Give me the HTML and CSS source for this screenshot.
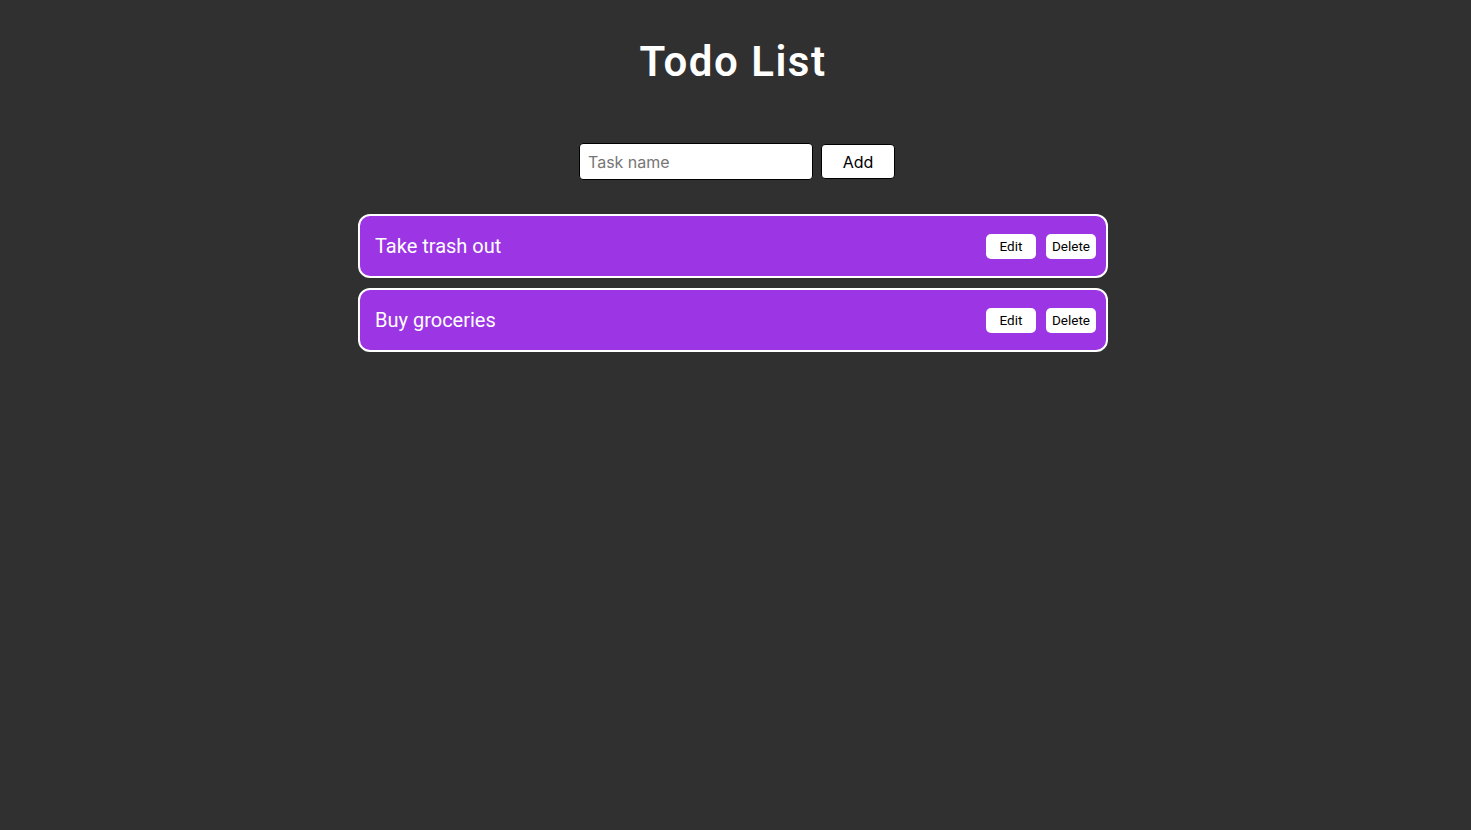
FILE: index.html
```html
<!DOCTYPE html>
<html>
<head>
<meta charset="utf-8">
<link rel="stylesheet" href="styles.css">
</head>
<body>
<div class="app">
  <h1 class="title">Todo List</h1>
  <form class="add-form">
    <input class="task-input" type="text" placeholder="Task name">
    <button class="add-btn" type="button">Add</button>
  </form>
  <ul class="todo-list">
    <li class="todo-item">
      <span class="todo-text">Take trash out</span>
      <div class="todo-actions">
        <button class="small-btn" type="button">Edit</button>
        <button class="small-btn" type="button">Delete</button>
      </div>
    </li>
    <li class="todo-item">
      <span class="todo-text">Buy groceries</span>
      <div class="todo-actions">
        <button class="small-btn" type="button">Edit</button>
        <button class="small-btn" type="button">Delete</button>
      </div>
    </li>
  </ul>
</div>
</body>
</html>
```
FILE: styles.css
```css
html, body {
  margin: 0;
  padding: 0;
  background: #303030;
  font-family: Roboto, "Liberation Sans", sans-serif;
  color: #ffffff;
}
.app {
  display: flex;
  flex-direction: column;
  align-items: center;
  padding-top: 36px;
  padding-right: 5px;
}
.title {
  margin: 0;
  font-size: 42px;
  font-weight: 600;
  letter-spacing: 1.5px;
  line-height: 52px;
}
.add-form {
  display: flex;
  align-items: center;
  gap: 8px;
  margin-top: 55px;
  padding-left: 8px;
}
.task-input {
  box-sizing: border-box;
  width: 234px;
  height: 37px;
  border: 1px solid #000;
  border-radius: 4px;
  padding: 0 8px;
  font-family: Inter, sans-serif;
  font-size: 16px;
  color: #000;
  background: #fff;
}
.task-input::placeholder {
  color: #767676;
}
.add-btn {
  box-sizing: border-box;
  width: 74px;
  height: 35px;
  border: 1px solid #000;
  border-radius: 4px;
  background: #fff;
  color: #000;
  font-family: Inter, sans-serif;
  font-size: 16px;
}
.todo-list {
  list-style: none;
  margin: 34px 0 0;
  padding: 0;
  width: 750px;
  display: flex;
  flex-direction: column;
  gap: 10px;
}
.todo-item {
  box-sizing: border-box;
  height: 64px;
  display: flex;
  align-items: center;
  justify-content: space-between;
  padding: 0 10px 0 15px;
  background: #9c35e3;
  border: 2px solid #fff;
  border-radius: 12px;
}
.todo-text {
  font-size: 20px;
}
.todo-actions {
  display: flex;
  gap: 10px;
}
.small-btn {
  box-sizing: border-box;
  width: 50px;
  height: 25px;
  border: none;
  border-radius: 5px;
  background: #fff;
  color: #000;
  font-family: Roboto, sans-serif;
  font-size: 13.5px;
  padding: 0;
}
```
